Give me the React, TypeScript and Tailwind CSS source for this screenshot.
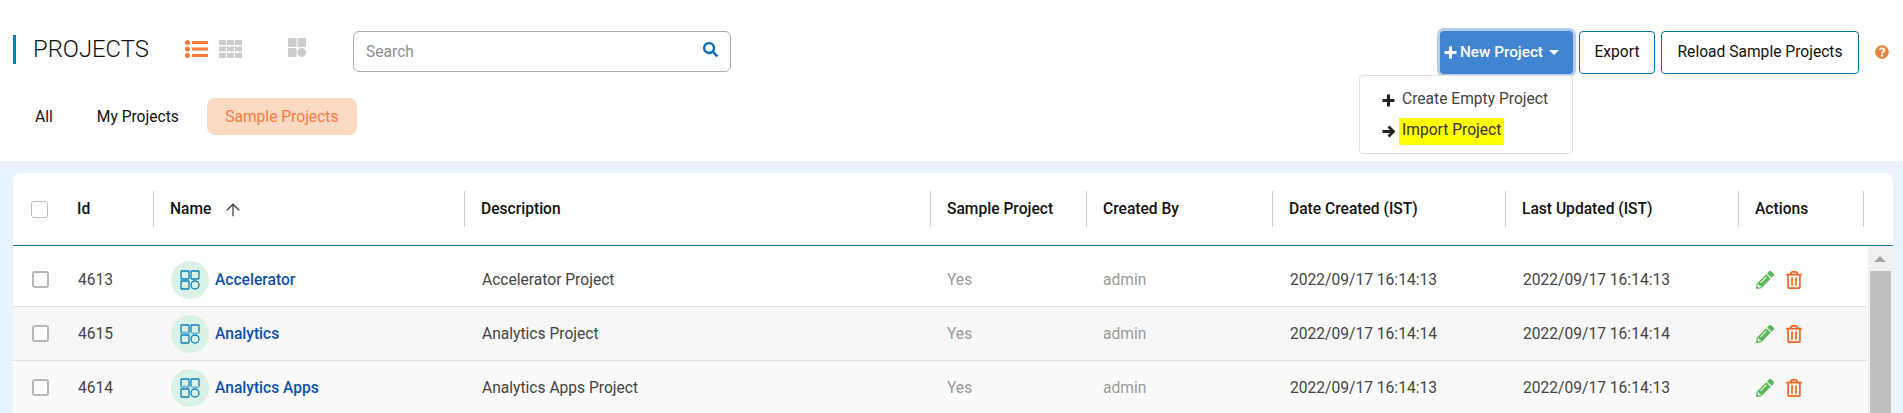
import { ArrowUp } from "lucide-react";
import {
  FaPencilAlt,
  FaQuestionCircle,
  FaRegTrashAlt,
  FaSearch,
} from "react-icons/fa";

const COLS = "grid grid-cols-[47px_94px_311px_466px_156px_186px_233px_233px_125px]";

const PROJECTS = [
  { id: 4613, name: "Accelerator", desc: "Accelerator Project", created: "2022/09/17 16:14:13", updated: "2022/09/17 16:14:13", bg: "bg-white", band: false },
  { id: 4615, name: "Analytics", desc: "Analytics Project", created: "2022/09/17 16:14:14", updated: "2022/09/17 16:14:14", bg: "bg-[#f7f7f7]", band: true },
  { id: 4614, name: "Analytics Apps", desc: "Analytics Apps Project", created: "2022/09/17 16:14:13", updated: "2022/09/17 16:14:13", bg: "bg-[#fafafa]", band: true },
];

const HEADERS = ["Description", "Sample Project", "Created By", "Date Created (IST)", "Last Updated (IST)", "Actions"];

function ListIcon() {
  return (
    <svg width="23" height="18" viewBox="0 0 23 18" fill="#f57c3c">
      <circle cx="2.5" cy="2.5" r="2.5" />
      <circle cx="2.5" cy="9" r="2.5" />
      <circle cx="2.5" cy="15.5" r="2.5" />
      <rect x="7" y="1" width="16" height="3" />
      <rect x="7" y="7.5" width="16" height="3" />
      <rect x="7" y="14" width="16" height="3" />
    </svg>
  );
}

function GridIcon() {
  return (
    <svg width="23" height="18" viewBox="0 0 23 18" fill="#cccccc">
      {[0, 6.5, 13].map((y) =>
        [0, 8, 16].map((x) => <rect key={`${x}-${y}`} x={x} y={y} width="7" height="5" />)
      )}
    </svg>
  );
}

function TilesIcon() {
  return (
    <svg width="18" height="19" viewBox="0 0 18 19" fill="#cccccc">
      <rect x="0" y="0" width="8.5" height="9" rx="1" />
      <rect x="9.5" y="0" width="8.5" height="9" rx="1" />
      <rect x="0" y="10" width="8.5" height="9" rx="1" />
      <circle cx="13.75" cy="14.5" r="4.4" />
    </svg>
  );
}

function PlusIcon({ color }: { color: string }) {
  return (
    <svg width="13" height="13" viewBox="0 0 13 13" stroke={color} strokeWidth="3" className="shrink-0">
      <path d="M6.5 0.5V12.5M0.5 6.5H12.5" />
    </svg>
  );
}

function ArrowIcon() {
  return (
    <svg width="13" height="13" viewBox="0 0 13 13" fill="none" stroke="#222" strokeWidth="2.8" className="shrink-0">
      <path d="M0.5 6.5H11M6.5 1.5L11.5 6.5L6.5 11.5" />
    </svg>
  );
}

function ProjectIcon({ band }: { band: boolean }) {
  return (
    <span className="flex h-[38px] w-[38px] shrink-0 items-center justify-center rounded-full bg-[#d9f2e3]">
      <svg width="20" height="20" viewBox="0 0 20 20" fill="none" stroke="#0a7fc0" strokeWidth="1.3">
        <rect x="1" y="1" width="8" height="8" rx="0.8" />
        <rect x="11" y="1" width="8" height="8" rx="0.8" />
        <rect x="1" y="11" width="8" height="8" rx="0.8" />
        <circle cx="15" cy="15" r="4" />
        {band && <rect x="0.5" y="7.5" width="9" height="2.5" fill="#7db9d2" stroke="none" />}
        {band && <rect x="11" y="8" width="8" height="1.5" fill="#a5cfdc" stroke="none" />}
      </svg>
    </span>
  );
}

function Checkbox() {
  return <span className="block h-[17px] w-[17px] rounded-[3px] border-2 border-[#b4b7bb] bg-white" />;
}

export default function App() {
  return (
    <div className="h-[413px] w-full overflow-hidden bg-[#e8f3fd] font-['Roboto',sans-serif] text-[15.6px] text-[#111]">
      {/* Header */}
      <div className="h-[161px] bg-white pt-[31px]">
        <div className="flex h-[43px] items-start pr-[14px]">
          <h1 className="ml-[13px] mt-[4px] flex h-[29px] w-[136px] items-center border-l-[3px] border-[#0a7fc0] pl-[17px] text-[23.8px] font-light leading-none text-[#111]">
            PROJECTS
          </h1>
          <span className="ml-[36px] mt-[9px]"><ListIcon /></span>
          <span className="ml-[11px] mt-[9px]"><GridIcon /></span>
          <span className="ml-[46px] mt-[7px]"><TilesIcon /></span>
          <div className="ml-[47px] flex h-[41px] w-[378px] items-center justify-between rounded-[6px] border border-[#aaaaaa] pl-3 pr-3">
            <span className="pt-[2px] text-[#8a9199]">Search</span>
            <FaSearch className="mb-1 text-[15px] text-[#0a6fb0]" />
          </div>

          <div className="ml-auto flex items-start gap-[6px]">
            <div className="relative">
              <button className="flex h-[43px] w-[133px] items-center rounded-[4px] bg-[#4184d1] pl-[4px] text-[15.3px] font-medium text-white ring-[3px] ring-[#b3cdea]">
                <PlusIcon color="#ffffff" />
                <span className="ml-[3px]">New Project</span>
                <span className="ml-[6px] h-0 w-0 border-x-[5px] border-t-[5px] border-x-transparent border-t-white" />
              </button>
              <div className="absolute right-0 top-[44px] z-10 h-[79px] w-[214px] rounded-[4px] border border-[#e2e2e2] bg-white pl-[22px] pt-[11px] text-[#444]">
                <div className="flex h-[26px] items-center gap-[7px]">
                  <PlusIcon color="#222222" />
                  Create Empty Project
                </div>
                <div className="mt-[5px] flex h-[26px] items-center gap-[4px]">
                  <ArrowIcon />
                  <span className="flex h-[27px] items-center bg-[#ffff00] px-[3px] text-[#333]">Import Project</span>
                </div>
              </div>
            </div>
            <button className="h-[43px] w-[76px] rounded-[4px] border border-[#0a73ac] text-[#111]">
              Export
            </button>
            <button className="h-[43px] w-[198px] rounded-[4px] border border-[#0a73ac] text-[#111]">
              Reload Sample Projects
            </button>
            <FaQuestionCircle className="ml-[10px] mt-[14px] text-[14px] text-[#e8833a]" />
          </div>
        </div>

        <div className="ml-[13px] mt-[24px] flex items-center">
          <span className="px-[22px] pt-[2px]">All</span>
          <span className="px-[22px] pt-[2px]">My Projects</span>
          <span className="ml-[6px] flex h-[37px] w-[150px] items-center justify-center rounded-[8px] bg-[#fcd9c3] pt-[2px] text-[#f57c3c]">
            Sample Projects
          </span>
        </div>
      </div>

      {/* Table */}
      <div className="ml-[13px] mr-[10px] mt-[12px] rounded-t-[8px] bg-white">
        <div className={`${COLS} h-[73px] items-center border-b border-[#0a73a0] font-medium`}>
          <span className="pl-[18px]">
            <span className="block h-[17px] w-[17px] rounded-[3px] border border-[#b9bcc0] bg-white" />
          </span>
          <span className="flex h-9 items-center border-r border-[#cccccc] pl-[17px] pt-[2px]">Id</span>
          <span className="flex h-9 items-center gap-[12px] border-r border-[#cccccc] pl-4 pt-[2px]">
            Name
            <ArrowUp className="h-5 w-5 text-[#444]" strokeWidth={1.6} />
          </span>
          {HEADERS.map((h) => (
            <span key={h} className="flex h-9 items-center border-r border-[#cccccc] pl-4 pt-[2px]">
              {h}
            </span>
          ))}
        </div>

        <div className="flex">
          <div className="flex-1 pt-[7px]">
            {PROJECTS.map((p) => (
              <div key={p.id} className={`${COLS} h-[54px] items-center border-b border-[#e0e0e0] text-[#444] ${p.bg}`}>
                <span className="pl-[19px]"><Checkbox /></span>
                <span className="pl-[18px] pt-[2px]">{p.id}</span>
                <span className="flex items-center gap-[6px] pl-[17px]">
                  <ProjectIcon band={p.band} />
                  <span className="pt-[2px] font-medium text-[#0f4fae]">{p.name}</span>
                </span>
                <span className="pl-[17px] pt-[2px]">{p.desc}</span>
                <span className="pl-4 pt-[2px] text-[#9a9a9a]">Yes</span>
                <span className="pl-4 pt-[2px] text-[#9a9a9a]">admin</span>
                <span className="pl-[17px] pt-[2px]">{p.created}</span>
                <span className="pl-[17px] pt-[2px]">{p.updated}</span>
                <span className="flex items-center gap-[11px] pl-[17px]">
                  <FaPencilAlt className="text-[18px] text-[#5cb85c]" />
                  <FaRegTrashAlt className="text-[18px] text-[#f7631b]" />
                </span>
              </div>
            ))}
          </div>
          <div className="ml-px flex w-[25px] flex-col bg-[#f1f1f1] pr-[2px]">
            <div className="flex h-[25px] items-center justify-center">
              <span className="h-0 w-0 border-x-[6px] border-b-[6px] border-x-transparent border-b-[#a6a6a6]" />
            </div>
            <div className="ml-[2px] flex-1 bg-[#c0c0c0]" />
          </div>
        </div>
      </div>
    </div>
  );
}
